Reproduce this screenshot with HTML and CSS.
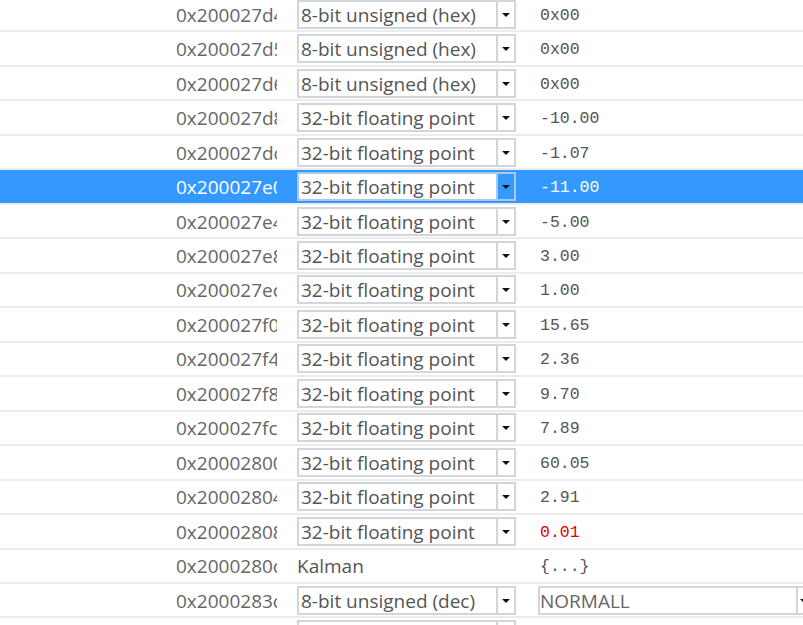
FILE: index.html
```html
<!DOCTYPE html>
<html>
<head>
<meta charset="utf-8">
<link rel="stylesheet" href="styles.css">
</head>
<body>
<div class="grid">
  <div class="row"><div class="addr">0x200027d4</div><div class="combo"><span class="ctext">8-bit unsigned (hex)</span><span class="cbtn"><i class="tri"></i></span></div><div class="val">0x00</div></div>
  <div class="row"><div class="addr">0x200027d5</div><div class="combo"><span class="ctext">8-bit unsigned (hex)</span><span class="cbtn"><i class="tri"></i></span></div><div class="val">0x00</div></div>
  <div class="row"><div class="addr">0x200027d6</div><div class="combo"><span class="ctext">8-bit unsigned (hex)</span><span class="cbtn"><i class="tri"></i></span></div><div class="val">0x00</div></div>
  <div class="row"><div class="addr">0x200027d8</div><div class="combo"><span class="ctext">32-bit floating point</span><span class="cbtn"><i class="tri"></i></span></div><div class="val">-10.00</div></div>
  <div class="row"><div class="addr">0x200027dc</div><div class="combo"><span class="ctext">32-bit floating point</span><span class="cbtn"><i class="tri"></i></span></div><div class="val">-1.07</div></div>
  <div class="row sel"><div class="addr">0x200027e0</div><div class="combo"><span class="ctext">32-bit floating point</span><span class="cbtn"><i class="tri"></i></span></div><div class="val">-11.00</div></div>
  <div class="row"><div class="addr">0x200027e4</div><div class="combo"><span class="ctext">32-bit floating point</span><span class="cbtn"><i class="tri"></i></span></div><div class="val">-5.00</div></div>
  <div class="row"><div class="addr">0x200027e8</div><div class="combo"><span class="ctext">32-bit floating point</span><span class="cbtn"><i class="tri"></i></span></div><div class="val">3.00</div></div>
  <div class="row"><div class="addr">0x200027ec</div><div class="combo"><span class="ctext">32-bit floating point</span><span class="cbtn"><i class="tri"></i></span></div><div class="val">1.00</div></div>
  <div class="row"><div class="addr">0x200027f0</div><div class="combo"><span class="ctext">32-bit floating point</span><span class="cbtn"><i class="tri"></i></span></div><div class="val">15.65</div></div>
  <div class="row"><div class="addr">0x200027f4</div><div class="combo"><span class="ctext">32-bit floating point</span><span class="cbtn"><i class="tri"></i></span></div><div class="val">2.36</div></div>
  <div class="row"><div class="addr">0x200027f8</div><div class="combo"><span class="ctext">32-bit floating point</span><span class="cbtn"><i class="tri"></i></span></div><div class="val">9.70</div></div>
  <div class="row"><div class="addr">0x200027fc</div><div class="combo"><span class="ctext">32-bit floating point</span><span class="cbtn"><i class="tri"></i></span></div><div class="val">7.89</div></div>
  <div class="row"><div class="addr">0x20002800</div><div class="combo"><span class="ctext">32-bit floating point</span><span class="cbtn"><i class="tri"></i></span></div><div class="val">60.05</div></div>
  <div class="row"><div class="addr">0x20002804</div><div class="combo"><span class="ctext">32-bit floating point</span><span class="cbtn"><i class="tri"></i></span></div><div class="val">2.91</div></div>
  <div class="row"><div class="addr">0x20002808</div><div class="combo"><span class="ctext">32-bit floating point</span><span class="cbtn"><i class="tri"></i></span></div><div class="val red">0.01</div></div>
  <div class="row"><div class="addr">0x2000280c</div><div class="plain">Kalman</div><div class="val">{...}</div></div>
  <div class="row"><div class="addr">0x2000283c</div><div class="combo"><span class="ctext">8-bit unsigned (dec)</span><span class="cbtn"><i class="tri"></i></span></div><div class="vcombo"><span class="vtext">NORMALL</span><span class="vbtn"><i class="tri"></i></span></div></div>
  <div class="row last"><div class="addr"></div><div class="combo"><span class="ctext"></span><span class="cbtn"></span></div></div>
</div>
</body>
</html>
```
FILE: styles.css
```css
html, body {
  margin: 0;
  padding: 0;
  background: #ffffff;
  overflow: hidden;
}
body {
  width: 803px;
  height: 625px;
  font-family: "Open Sans", "Noto Sans", sans-serif;
}
.grid {
  margin-top: -2px;
  display: flex;
  flex-direction: column;
}
.row {
  box-sizing: border-box;
  height: 34.47px;
  flex: none;
  border-bottom: 2px solid #ececec;
  display: flex;
  align-items: center;
  background: #ffffff;
}
.row.last {
  align-items: flex-start;
  padding-top: 2px;
}
.row.sel {
  background: #3399ff;
}
.addr {
  margin-left: 176px;
  width: 101px;
  margin-right: 8px;
  height: 29px;
  line-height: 29px;
  padding-top: 1px;
  box-sizing: border-box;
  overflow: hidden;
  white-space: nowrap;
  font-size: 19px;
  color: #666666;
  flex: none;
}
.sel .addr, .sel .val {
  color: #ffffff;
}
.combo {
  margin-left: 12px;
  box-sizing: border-box;
  width: 219px;
  height: 29px;
  border: 2px solid #d3d5dc;
  display: flex;
  background: #ffffff;
  flex: none;
}
.ctext {
  flex: 1;
  padding-left: 2px;
  font-size: 19px;
  line-height: 26px;
  color: #555555;
  white-space: nowrap;
  overflow: hidden;
}
.cbtn {
  width: 16px;
  border-left: 2px solid #d3d5dc;
  display: flex;
  align-items: center;
  justify-content: center;
  background: #ffffff;
}
.sel .cbtn {
  background: #3399ff;
  border-left-color: #a9c9ec;
}
.sel .combo {
  border-color: #a9c9ec;
}
.tri {
  display: block;
  width: 0;
  height: 0;
  border-left: 4.5px solid transparent;
  border-right: 4.5px solid transparent;
  border-top: 4.5px solid #111111;
  margin-top: 1px;
}
.plain {
  margin-left: 12px;
  width: 219px;
  height: 29px;
  line-height: 29px;
  padding-top: 1px;
  box-sizing: border-box;
  font-size: 19px;
  color: #555555;
  flex: none;
}
.val {
  margin-left: 24px;
  height: 29px;
  line-height: 29px;
  padding-top: 1px;
  box-sizing: border-box;
  font-family: "Liberation Mono", "DejaVu Sans Mono", monospace;
  font-size: 16.5px;
  color: #555555;
  white-space: nowrap;
}
.val.red {
  color: #e00000;
}
.vcombo {
  margin-left: 22px;
  box-sizing: border-box;
  height: 29px;
  flex: 1;
  display: flex;
  border: 2px solid #d3d5dc;
  border-right: none;
}
.vtext {
  width: 256px;
  flex: none;
  font-size: 19px;
  line-height: 26px;
  color: #666666;
}
.vbtn {
  flex: 1;
  border-left: 2px solid #d3d5dc;
  display: flex;
  align-items: center;
  padding-left: 2px;
}
```
